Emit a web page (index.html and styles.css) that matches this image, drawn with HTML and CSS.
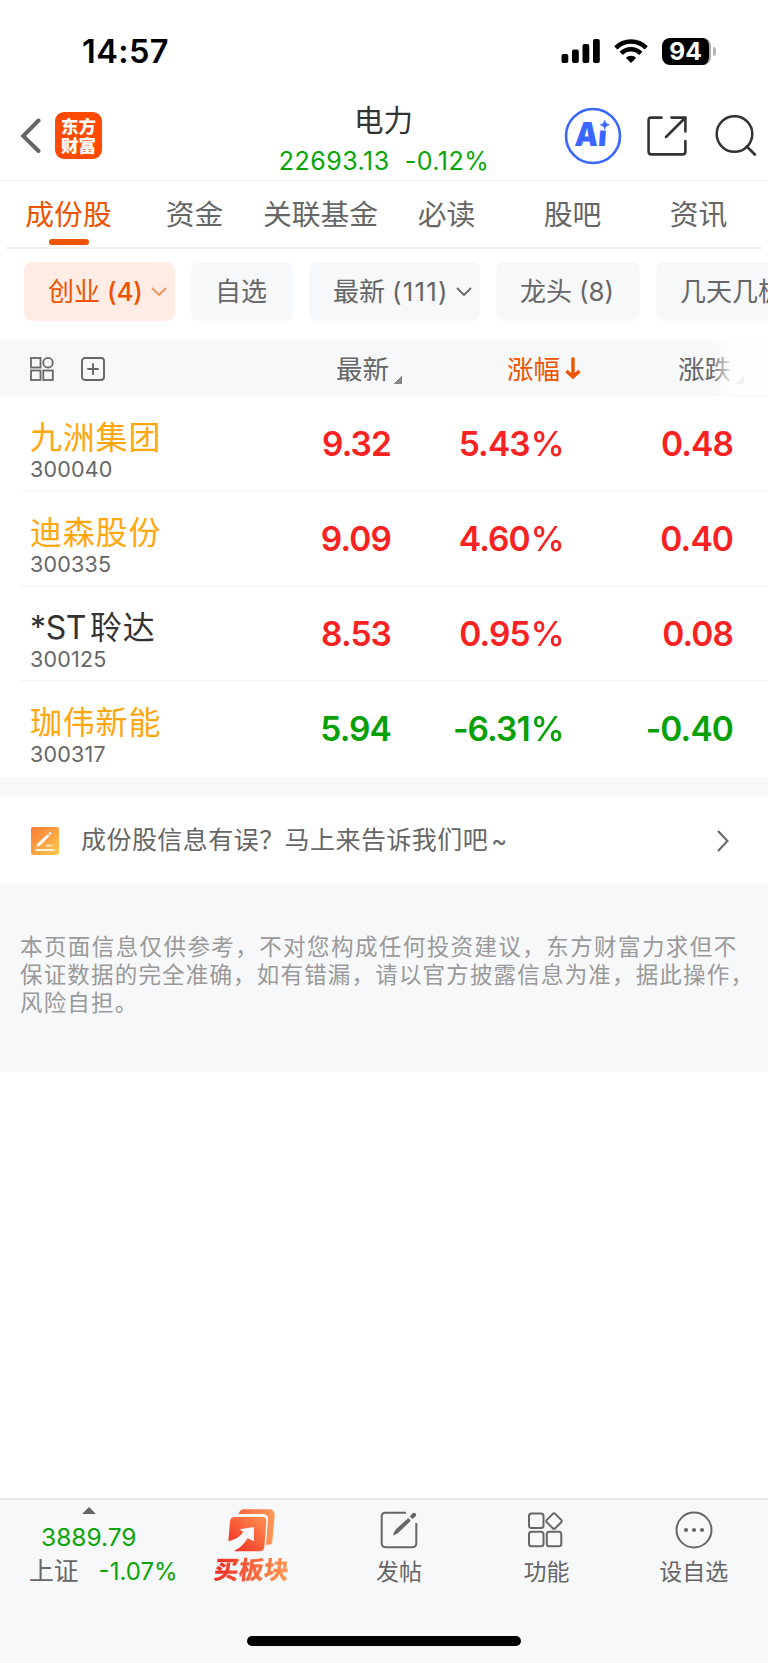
FILE: index.html
```html
<!DOCTYPE html>
<html lang="zh-CN">
<head>
<meta charset="utf-8">
<title>电力</title>
<link rel="stylesheet" href="styles.css">
</head>
<body>
<div class="page">
  <div class="status">
    <span class="clock">14:57</span>
    <div class="status-icons">
      <svg width="40" height="28" viewBox="0 0 40 28"><rect x="0.5" y="17" width="6.8" height="9" rx="2"/><rect x="11" y="12.5" width="6.8" height="13.5" rx="2"/><rect x="21.5" y="7" width="6.8" height="19" rx="2"/><rect x="32" y="2" width="6.8" height="24" rx="2"/></svg>
      <svg class="wifi" width="36" height="28" viewBox="0 0 36 28"><g fill="none" stroke="#000" stroke-width="4.6"><path d="M2.8 10.8a21.5 21.5 0 0 1 30.4 0"/><path d="M8.2 16.3a13.8 13.8 0 0 1 19.6 0"/></g><path d="M18 26l-5.2-5.2a7.4 7.4 0 0 1 10.4 0z"/></svg>
      <div class="battery"><span>94</span></div>
      <i class="nub"></i>
    </div>
  </div>

  <div class="header">
    <div class="head-left">
      <svg width="22" height="36" viewBox="0 0 22 36"><path d="M18.5 2.5L3.2 18l15.3 15" fill="none" stroke="#666" stroke-width="4" stroke-linecap="round"/></svg>
      <div class="logo"><span>东方</span><span>财富</span></div>
    </div>
    <div class="head-title">
      <div class="title">电力</div>
      <div class="quote"><span>22693.13</span><span>-0.12%</span></div>
    </div>
    <div class="head-right">
      <svg width="58" height="58" viewBox="0 0 58 58"><circle cx="29" cy="29" r="27" fill="none" stroke="#3967ff" stroke-width="2.6"/><text class="ai" x="11" y="39.5" transform="skewX(-4) translate(2 0)" textLength="32" lengthAdjust="spacingAndGlyphs">Ai</text><rect x="34" y="9" width="12" height="14.500" fill="#fff"/><path d="M40.800 13.200c.9 2.900 1.700 3.700 4.600 4.600-2.900.9-3.700 1.700-4.600 4.600-.9-2.900-1.700-3.700-4.600-4.600 2.900-.9 3.700-1.700 4.600-4.600z" fill="#3967ff" stroke="#3967ff" stroke-width=".6"/></svg>
      <svg class="share" width="42" height="42" viewBox="0 0 42 42"><path d="M15.500 2.600H5Q2.600 2.600 2.600 5V36.500Q2.600 39.400 5.500 39.400H36.500Q39.400 39.400 39.400 36.500V26M25.500 2.600H39.400V16.500M39 3L20 22" fill="none" stroke="#333" stroke-width="2.600" stroke-linecap="round"/></svg>
      <svg class="search" width="42" height="42" viewBox="0 0 42 42"><circle cx="19.500" cy="19" r="17.800" fill="none" stroke="#333" stroke-width="2.500"/><path d="M31.800 31.500l8 8" stroke="#333" stroke-width="2.700" stroke-linecap="round"/></svg>
    </div>
  </div>

  <div class="tabs">
    <span class="tab active">成份股</span><span class="tab">资金</span><span class="tab">关联基金</span><span class="tab">必读</span><span class="tab">股吧</span><span class="tab">资讯</span>
  </div>

  <div class="chips">
    <div class="chip on c1">创业<b>(4)</b><svg width="16" height="10" viewBox="0 0 16 10"><path d="M1 1l7 7 7-7" fill="none" stroke="currentColor" stroke-width="1.800"/></svg></div>
    <div class="chip c2">自选</div>
    <div class="chip c3">最新<b>(111)</b><svg width="16" height="10" viewBox="0 0 16 10"><path d="M1 1l7 7 7-7" fill="none" stroke="currentColor" stroke-width="1.800"/></svg></div>
    <div class="chip c4">龙头<b>(8)</b></div>
    <div class="chip c5">几天几板</div>
  </div>

  <div class="thead">
    <div class="tools">
      <svg width="24" height="24" viewBox="0 0 24 24" fill="none" stroke="#666" stroke-width="1.800"><rect x="1" y="1" width="9.500" height="9.500"/><circle cx="18" cy="5.700" r="4.800"/><rect x="1" y="13.500" width="9.500" height="9.500"/><rect x="13.300" y="13.500" width="9.500" height="9.500"/></svg>
      <svg width="24" height="24" viewBox="0 0 24 24" fill="none" stroke="#666" stroke-width="1.900"><rect x="1" y="1" width="22" height="22" rx="3"/><path d="M12 6.300v11.400M6.300 12h11.400"/></svg>
    </div>
    <div class="th h1">最新<i class="tri"></i></div>
    <div class="th h2">涨幅<svg width="16" height="23" viewBox="0 0 16 23"><path d="M8 0.500V19M1.500 14L8 20l6.500-6" fill="none" stroke="#ee5300" stroke-width="3.400"/></svg></div>
    <div class="th h3">涨跌<i class="tri"></i></div>
    <div class="fade"></div>
  </div>

  <div class="rows">
    <div class="row up"><div class="stock"><div class="name">九洲集团</div><div class="code">300040</div></div><div class="num">9.32</div><div class="num">5.43<em>%</em></div><div class="num">0.48</div></div>
    <div class="row up"><div class="stock"><div class="name">迪森股份</div><div class="code">300335</div></div><div class="num">9.09</div><div class="num">4.60<em>%</em></div><div class="num">0.40</div></div>
    <div class="row up"><div class="stock"><div class="name dark"><span class="latin">*ST</span>聆达</div><div class="code">300125</div></div><div class="num">8.53</div><div class="num">0.95<em>%</em></div><div class="num">0.08</div></div>
    <div class="row down"><div class="stock"><div class="name">珈伟新能</div><div class="code">300317</div></div><div class="num">5.94</div><div class="num">-6.31<em>%</em></div><div class="num">-0.40</div></div>
  </div>

  <div class="feedback">
    <svg width="28" height="28" viewBox="0 0 28 28"><defs><linearGradient id="fg" x1="0" y1="0" x2="1" y2="1"><stop offset="0" stop-color="#ff7b36"/><stop offset="1" stop-color="#ffc94f"/></linearGradient></defs><rect width="28" height="28" rx="2" fill="url(#fg)"/><path d="M5.200 20.300l1.200-3.600L16.600 7.200l1.900 1.900L8.600 18.900zM17.300 6.300l1-1q.9-.6 1.600.1t.2 1.500l-1 1.100z" fill="#fff"/><path d="M14.300 18.600h7" stroke="#ffe6bd" stroke-width="1.800"/><path d="M4.500 23h19" stroke="#fff3df" stroke-width="2"/></svg>
    <span class="fb-text">成份股信息有误？马上来告诉我们吧<span class="latin">~</span></span>
    <svg width="14" height="24" viewBox="0 0 14 24"><path d="M2 2l9.500 10L2 22" fill="none" stroke="#666" stroke-width="2"/></svg>
  </div>

  <div class="notice">
    <div class="l1">本页面信息仅供参考，不对您构成任何投资建议，东方财富力求但不</div>
    <div class="l2">保证数据的完全准确，如有错漏，请以官方披露信息为准，据此操作，</div>
    <div class="l2">风险自担。</div>
  </div>

  <div class="spacer"></div>

  <div class="bottom">
    <div class="nav">
      <div class="index">
        <i class="caret"></i>
        <div class="iv">3889.79</div>
        <div class="ir"><span class="in">上证</span><span class="ip">-1.07%</span></div>
      </div>
      <div class="item buy">
        <svg width="50" height="48" viewBox="0 0 150 144"><defs><linearGradient id="bg" x1="0" y1="1" x2="1" y2="0"><stop offset="0" stop-color="#f02a22"/><stop offset="1" stop-color="#ff9350"/></linearGradient><linearGradient id="bk" x1="0" y1="0" x2="1" y2="0"><stop offset="0" stop-color="#f9683f"/><stop offset="1" stop-color="#ff9955"/></linearGradient></defs><path d="M35 21Q38 7 51 7H125Q144 7 143 26L136 104Q135 113 126 113H117L123 37Q123 22 109 21Z" fill="url(#bk)"/><path d="M25 30H108Q119 30 118 42L112 121Q110 133 99 133H20C38 124 50 113 62 94L81 103V60L38 67 49 75C40 88 25 98 4 103L9 43Q10 30 25 30Z" fill="url(#bg)"/></svg>
        <span class="buy-label">买板块</span>
      </div>
      <div class="item">
        <svg width="38" height="38" viewBox="0 0 38 38"><path d="M26 1.700H5.500Q1.700 1.700 1.700 5.500V32.300Q1.700 36.200 5.500 36.200H32.500Q36.300 36.200 36.300 32.300V12" fill="none" stroke="#666" stroke-width="2"/><path d="M13 24.500q.3-3.500 3-6.300L28.300 7l2.500 2.700L18.800 21.300q-2.500 2.600-5.800 3.200zM29.700 5.500l2.700-3q1.500-1.400 3-.2t.3 3l-3.200 2.800z" fill="#666"/></svg>
        <span>发帖</span>
      </div>
      <div class="item">
        <svg width="38" height="38" viewBox="0 0 38 38" fill="none" stroke="#666" stroke-width="2"><rect x="2" y="2.500" width="14.500" height="14.500" rx="2.500"/><rect x="2" y="20.700" width="14.500" height="14.500" rx="2.500"/><rect x="19.800" y="20.700" width="14.500" height="14.500" rx="2.500"/><path d="M25.800 2.900q1.200-1.200 2.400 0l6 6q1.200 1.200 0 2.400l-6 6q-1.200 1.200-2.400 0l-6-6q-1.200-1.200 0-2.400z"/></svg>
        <span>功能</span>
      </div>
      <div class="item">
        <svg width="38" height="38" viewBox="0 0 38 38"><circle cx="19" cy="19" r="17.500" fill="none" stroke="#666" stroke-width="2"/><circle cx="11" cy="19" r="2.100" fill="#666"/><circle cx="19" cy="19" r="2.100" fill="#666"/><circle cx="27" cy="19" r="2.100" fill="#666"/></svg>
        <span>设自选</span>
      </div>
    </div>
    <div class="home"></div>
  </div>
</div>
</body>
</html>
```

FILE: styles.css
```css
* { box-sizing: border-box; }
body { margin: 0; background: #fff; font-family: Inter, "Noto Sans CJK SC", sans-serif; color: #666; }
svg { display: block; flex: none; }
.page { width: 768px; height: 1663px; display: flex; flex-direction: column; overflow: hidden; }
.page > div { flex: none; }

.status { height: 92px; padding: 31px 52px 0 82px; display: flex; justify-content: space-between; align-items: flex-start; color: #000; }
.clock { font-size: 32.500px; font-weight: 600; line-height: 41px; letter-spacing: .4px; }
.status-icons { display: flex; align-items: center; height: 40px; }
.wifi { margin: 0 13px 0 12px; }
.battery { width: 49px; height: 27px; border-radius: 8px; background: #000; color: #fff; border-right: 2px solid #aaa; font-size: 24.500px; font-weight: 700; line-height: 27px; text-align: center; }
.nub { width: 3px; height: 9px; margin-left: 2px; border-radius: 0 5px 5px 0; background: #b5b5b5; }

.header { height: 89px; border-bottom: 1px solid #eee; display: grid; grid-template-columns: 1fr auto 1fr; }
.head-left { display: flex; align-items: center; padding: 0 0 1px 20px; gap: 13px; }
.logo { width: 47px; height: 47px; border-radius: 9px; background: #ff4a00; color: #fff; font-size: 17.500px; font-weight: 900; line-height: 19px; display: flex; flex-direction: column; align-items: center; justify-content: center; }
.head-title { padding-top: 9px; text-align: center; }
.title { font-size: 29.500px; line-height: 38px; color: #333; margin-left: -1px; }
.quote { margin-top: 4px; line-height: 36px; display: flex; gap: 15px; font-size: 25px; letter-spacing: .5px; color: #09a509; }
.head-right { display: flex; align-items: center; justify-content: flex-end; padding-right: 11px; }
.share { margin: 0 27px 0 24px; }
.ai { font: 900 33px Inter, sans-serif; fill: #3967ff; }

.tabs { height: 68px; margin: 0 6px; border-bottom: 2px solid #eeeff2; display: grid; grid-template-columns: repeat(6, 126px); }
.tab { font-size: 28.800px; line-height: 67px; height: 66px; padding-right: 1px; text-align: center; white-space: nowrap; position: relative; }
.active { color: #ee5300; }
.active::after { content: ""; position: absolute; left: 43px; top: 58px; width: 40px; height: 6px; border-radius: 3px; background: #ee5300; }

.chips { height: 92px; padding: 13px 0 0 24px; display: flex; gap: 16px; overflow: hidden; }
.chip { height: 59px; flex: none; border-radius: 8px; background: #f7f8fa; font-size: 26px; line-height: 61px; display: flex; align-items: center; padding-left: 24px; white-space: nowrap; }
.chip b { font-weight: 400; margin-left: 7px; }
.chip svg { margin-left: auto; margin-right: 8px; }
.on { background: #ffede5; color: #ee5300; padding-left: 24px; }
.on b { font-weight: 500; letter-spacing: -.2px; }
.on svg { opacity: .6; }
.c3 b { letter-spacing: 1.200px; }
.c1 { width: 151px; } .c2 { width: 102px; } .c3 { width: 171px; } .c4 { width: 144px; } .c5 { width: 152px; }

.thead { height: 55px; background: #f7f8fa; display: flex; position: relative; font-size: 26.500px; line-height: 57px; }
.tools { width: 336px; padding: 16px 0 0 30px; display: flex; gap: 27px; }
.th { display: flex; align-items: flex-start; white-space: nowrap; }
.h1 { width: 171px; } .h2 { width: 171px; color: #ee5300; }
.h2 svg { margin: 16px 0 0 5px; }
.tri { width: 8px; height: 8px; margin: 35px 0 0 5px; background: linear-gradient(135deg, transparent 50%, #888 50%); }
.fade { position: absolute; right: 0; top: 1px; width: 58px; height: 53px; background: linear-gradient(90deg, rgba(255,255,255,0), rgba(255,255,255,.88) 22px, rgba(255,255,255,.9)); }

.rows { height: 380.500px; padding: 1px 0 0 20px; }
.row { height: 95px; border-bottom: 2px solid #f7f8fa; display: grid; grid-template-columns: 200px 171px 172px 170px; }
.row:last-child { border-bottom-color: transparent; }
.stock { padding: 21px 0 0 10px; white-space: nowrap; }
.name { font-size: 32px; line-height: 40px; letter-spacing: .8px; color: #ffa70d; }
.dark { color: #333; }
.dark .latin { margin-right: 4px; letter-spacing: -.4px; }
.code { font-size: 21.500px; line-height: 22px; letter-spacing: .2px; }
.num { font-size: 33.500px; font-weight: 600; line-height: 95px; letter-spacing: -.9px; text-align: right; white-space: nowrap; }
.num em { display: inline-block; font-style: normal; font-weight: 500; margin: 0 -1px 0 1px; letter-spacing: 0; transform: scaleX(1.03); }
.up .num { color: #f82222; }
.down .num { color: #07a007; }

.feedback { height: 108.500px; border-top: 20px solid #f7f8fa; display: flex; align-items: center; padding: 0 38px 0 31px; }
.fb-text { flex: 1; padding-left: 22px; font-size: 25px; letter-spacing: .45px; line-height: 60px; }
.fb-text .latin { margin-left: 3px; font-size: 24px; }

.notice { height: 186.500px; background: #f7f8fa; padding: 48px 0 0 20px; font-size: 22.500px; line-height: 28px; color: #999; white-space: nowrap; }
.l1 { letter-spacing: 1.420px; }
.l2 { letter-spacing: 1.180px; }
.page > .spacer { flex: 1; }

.bottom { height: 165px; background: #f7f8fa; border-top: 2px solid #e6e6e6; }
.nav { height: 136px; display: grid; grid-template-columns: 178px repeat(4, 147.400px); }
.index { display: flex; flex-direction: column; }
.caret { margin: 7px 0 0 82px; width: 0; border: 7px solid transparent; border-top: 0; border-bottom-color: #666; }
.iv { padding-left: 41px; margin-top: 6px; font-size: 24.500px; line-height: 34px; color: #09a509; }
.ir { display: flex; align-items: center; gap: 20px; padding-left: 29px; font-size: 24px; line-height: 35px; white-space: nowrap; }
.in { font-size: 24.800px; }
.ip { color: #09a509; }
.item { display: flex; flex-direction: column; align-items: center; padding-top: 11px; font-size: 23px; line-height: 36px; }
.item span { margin-top: 5px; }
.buy { padding-top: 7px; }
.item .buy-label { margin-top: -3px; font-size: 25px; font-weight: 900; transform: skewX(-6deg); background: linear-gradient(90deg, #f02a22, #ff9c55); -webkit-background-clip: text; background-clip: text; color: transparent; }
.home { width: 274px; height: 10px; border-radius: 5px; background: #000; margin-left: 247px; }
```
